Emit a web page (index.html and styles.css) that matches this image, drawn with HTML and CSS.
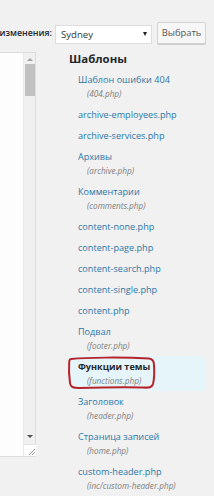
FILE: index.html
```html
<!DOCTYPE html>
<html lang="ru">

<head>
    <meta charset="UTF-8">
    <meta name="viewport" content="width=device-width, initial-scale=1.0">
    <title>Редактор тем</title>

    <link rel="stylesheet" href="styles.css">
</head>

<body>
    <div class="topBar">
        <span class="themeLabel">изменения:</span>
        <div class="themeSelect">
            <span>Sydney</span>
            <span class="arrow"></span>
        </div>
        <div class="btn">Выбрать</div>
    </div>

    <div class="main">
        <div class="editor">
            <div class="editorBody"></div>
            <div class="scrollbar">
                <div class="scrollUp"></div>
                <div class="thumb"></div>
                <div class="spacer"></div>
                <div class="scrollDown"></div>
                <div class="resize">
                    <svg width="10" height="10" viewBox="0 0 10 10">
                        <path d="M3 9 L9 3 M6 9 L9 6" stroke="#999" stroke-width="1" fill="none" />
                    </svg>
                </div>
            </div>
        </div>

        <div class="sidebar">
            <h3>Шаблоны</h3>
            <ul class="fileList">
                <li><a href="#">Шаблон ошибки 404</a><span class="file">(404.php)</span></li>
                <li><a href="#">archive-employees.php</a></li>
                <li><a href="#">archive-services.php</a></li>
                <li><a href="#">Архивы</a><span class="file">(archive.php)</span></li>
                <li><a href="#">Комментарии</a><span class="file">(comments.php)</span></li>
                <li><a href="#">content-none.php</a></li>
                <li><a href="#">content-page.php</a></li>
                <li><a href="#">content-search.php</a></li>
                <li><a href="#">content-single.php</a></li>
                <li><a href="#">content.php</a></li>
                <li><a href="#">Подвал</a><span class="file">(footer.php)</span></li>
                <li class="current">
                    <a href="#">Функции темы</a><span class="file">(functions.php)</span>
                    <!-- красная обводка поверх пункта -->
                    <svg class="mark" width="92" height="34" viewBox="0 0 92 34">
                        <path d="M4 3 C20 1.5 55 1 82 2.5 C86 3 87 5 87 9 C87.5 16 87 24 86 28 C85 31.5 82 32 76 31.5 C55 31 30 31.5 12 32 C6 32 3.5 31 3 27 C2 20 1.8 12 2.2 6 C2.4 4 3 3 4 3 Z"
                            stroke="#b8232b" stroke-width="2" fill="none" stroke-linejoin="round" />
                    </svg>
                </li>
                <li><a href="#">Заголовок</a><span class="file">(header.php)</span></li>
                <li><a href="#">Страница записей</a><span class="file">(home.php)</span></li>
                <li><a href="#">custom-header.php</a><span class="file">(inc/custom-header.php)</span></li>
            </ul>
        </div>
    </div>
</body>

</html>
```

FILE: styles.css
```css
* {
    box-sizing: border-box;
}

body {
    margin: 0;
    width: 214px;
    height: 496px;
    overflow: hidden;
    background-color: #f1f1f1;
    font-family: "Open Sans", "Liberation Sans", sans-serif;
    color: #23282d;
}

.topBar {
    display: flex;
    justify-content: flex-end;
    align-items: center;
    padding: 22px 8px 0 0;
    white-space: nowrap;
}

.themeLabel {
    font-size: 8.8px;
    font-weight: 600;
    margin-right: 3px;
}

.themeSelect {
    width: 97px;
    height: 19px;
    margin-top: 2px;
    background-color: #fff;
    border: 1px solid #ddd;
    display: flex;
    align-items: center;
    justify-content: space-between;
    padding: 0 4px 0 5px;
    font-size: 9.6px;
    color: #32373c;
    flex-shrink: 0;
}

.arrow {
    width: 0;
    height: 0;
    border-left: 2.5px solid transparent;
    border-right: 2.5px solid transparent;
    border-top: 4px solid #222;
    margin-bottom: 1px;
}

.btn {
    width: 49px;
    height: 22px;
    margin-left: 5px;
    background-color: #f7f7f7;
    border: 1px solid #d4d4d4;
    border-radius: 2px;
    box-shadow: 0 1px 0 #ccc;
    font-size: 9.4px;
    color: #555;
    text-align: center;
    line-height: 20px;
    flex-shrink: 0;
}

.main {
    display: flex;
    align-items: flex-start;
    margin-top: 8px;
}

.editor {
    width: 36px;
    height: 405px;
    display: flex;
    background-color: #fdfdfd;
    border: 1px solid #dcdcdc;
    border-left: none;
    flex-shrink: 0;
}

.editorBody {
    flex: 1;
}

.scrollbar {
    width: 12px;
    display: flex;
    flex-direction: column;
    align-items: center;
    background-color: #f0f0f0;
    border-left: 1px solid #e8e8e8;
}

.scrollUp,
.scrollDown {
    width: 0;
    height: 0;
    border-left: 3px solid transparent;
    border-right: 3px solid transparent;
}

.scrollUp {
    margin-top: 5px;
    border-bottom: 3px solid #a3a3a3;
}

.scrollDown {
    border-top: 3px solid #505050;
    margin-bottom: 6px;
}

.thumb {
    width: 10px;
    height: 32px;
    margin-top: 3px;
    background-color: #c1c1c1;
}

.spacer {
    flex: 1;
}

.resize {
    width: 12px;
    height: 12px;
    background-color: #fff;
    border-top: 1px solid #e4e4e4;
    display: flex;
    justify-content: flex-end;
    align-items: flex-end;
}

.resize svg {
    display: block;
}

.sidebar {
    flex: 1;
    padding: 0 9px 0 33px;
}

.sidebar h3 {
    margin: 0;
    font-size: 11.4px;
    font-weight: 700;
    line-height: 14px;
    color: #23282d;
}

.fileList {
    list-style: none;
    margin: 3px 0 0 1px;
    padding: 0;
}

.fileList li {
    position: relative;
    padding: 3.5px 0 3.5px 8px;
    line-height: 14px;
}

.fileList a {
    display: block;
    font-size: 9.1px;
    color: #2a77a8;
    text-decoration: none;
}

.file {
    display: block;
    padding-left: 9px;
    font-size: 8.2px;
    font-style: italic;
    color: #7e7e7e;
}

.fileList li.current {
    background-color: #e5f5fa;
}

.fileList li.current a {
    font-weight: 700;
    color: #23282d;
}

.mark {
    position: absolute;
    left: -3px;
    top: 0;
}
```
